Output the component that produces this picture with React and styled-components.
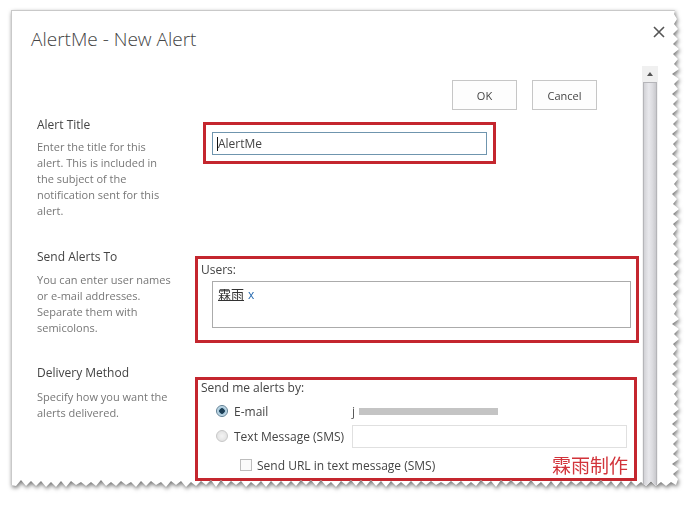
import styled, { createGlobalStyle } from "styled-components";

const GlobalStyle = createGlobalStyle`
    html, body {
        margin: 0;
        padding: 0;
        background: #ffffff;
        width: 700px;
        height: 506px;
        overflow: hidden;
    }
`;

const FONT = `"Segoe UI", "Open Sans", "Noto Sans CJK SC", sans-serif`;

// jagged "torn paper" outline for the right and bottom edges
const tornEdge = (w, h) => {
    const pts = ["0px 0px", `${w - 5}px 0px`];
    let i = 0;
    for (let y = 4; y < h - 8; y += 5, i++) {
        const jitter = Math.round((Math.sin(i * 12.9898) * 43758.5453) % 1 * 2);
        const x = w - (i % 2 ? 1 : 6) - Math.abs(jitter);
        pts.push(`${x}px ${y}px`);
    }
    pts.push(`${w - 4}px ${h - 3}px`);
    i = 0;
    for (let x = w - 9; x > 0; x -= 5, i++) {
        const jitter = Math.round((Math.sin(i * 78.233) * 12345.678) % 1 * 2);
        const y = h - (i % 2 ? 1 : 6) - Math.abs(jitter);
        pts.push(`${x}px ${y}px`);
    }
    pts.push(`0px ${h - 3}px`);
    return `polygon(${pts.join(", ")})`;
};

const Page = styled.div`
    width: 700px;
    height: 506px;
    padding: 10px 0 0 11px;
    box-sizing: border-box;
    filter: drop-shadow(1px 2px 2px rgba(0, 0, 0, 0.55));
`;

const Dialog = styled.div`
    width: 669px;
    height: 478px;
    box-sizing: border-box;
    background: #ffffff;
    border-left: 1px solid #c9c9c9;
    border-top: 1px solid #c9c9c9;
    clip-path: ${tornEdge(669, 478)};
    display: flex;
    flex-direction: column;
    font-family: ${FONT};
    color: #444444;
`;

const Header = styled.div`
    height: 55px;
    display: flex;
    justify-content: space-between;
    align-items: flex-start;
    padding: 15px 15px 0 19px;
    box-sizing: border-box;
`;

const Title = styled.h1`
    margin: 0;
    font-size: 19px;
    font-weight: 300;
    line-height: 26px;
    color: #444444;
`;

const CloseButton = styled.div`
    width: 12px;
    height: 12px;
    svg { display: block; }
`;

const Body = styled.div`
    flex: 1;
    display: flex;
    min-height: 0;
    padding-right: 22px;
`;

const Content = styled.div`
    flex: 1;
    display: flex;
    flex-direction: column;
    padding-left: 25px;
    overflow: hidden;
`;

const ButtonRow = styled.div`
    display: flex;
    justify-content: flex-end;
    gap: 15px;
    margin-top: 14px;
    padding-right: 45px;
`;

const Button = styled.div`
    width: 65px;
    height: 30px;
    box-sizing: border-box;
    border: 1px solid #c6c6c6;
    background: #fdfdfd;
    display: flex;
    align-items: center;
    justify-content: center;
    font-size: 11px;
    color: #444444;
`;

const Section = styled.div`
    display: flex;
    margin-top: ${({ $top }) => $top}px;
`;

const Info = styled.div`
    width: 158px;
    flex-shrink: 0;
`;

const Label = styled.div`
    font-size: 12px;
    line-height: 16px;
    color: #444444;
`;

const Desc = styled.div`
    margin-top: ${({ $gap }) => $gap}px;
    font-size: 11px;
    line-height: 16px;
    color: #777777;
    width: 136px;
`;

const Field = styled.div`
    flex: 1;
    min-width: 0;
`;

const Highlight = styled.div`
    border: 3px solid #c4262e;
    box-sizing: border-box;
    width: ${({ $w }) => $w}px;
    height: ${({ $h }) => $h}px;
    margin-top: ${({ $top }) => $top}px;
    margin-left: ${({ $left }) => $left || 0}px;
    padding: ${({ $pad }) => $pad};
`;

const TextInput = styled.div`
    height: 23px;
    box-sizing: border-box;
    border: 1px solid #6f95ae;
    display: flex;
    align-items: center;
    padding-left: 4px;
    font-size: 12px;
`;

const Caret = styled.span`
    width: 1px;
    height: 14px;
    background: #111111;
`;

const FieldLabel = styled.div`
    font-size: 12px;
    line-height: 16px;
    color: #444444;
`;

const PeoplePicker = styled.div`
    margin: 3px 0 0 11px;
    height: 47px;
    box-sizing: border-box;
    border: 1px solid #ababab;
    padding: 4px 5px;
    font-size: 12px;
    line-height: 16px;
`;

const Person = styled.span`
    text-decoration: underline;
    color: #333333;
    font-family: "Noto Sans CJK SC", sans-serif;
    font-size: 13px;
`;

const Remove = styled.span`
    color: #2a6cb0;
    margin-left: 4px;
`;

const OptionRow = styled.div`
    display: flex;
    align-items: center;
    height: ${({ $h }) => $h}px;
    margin-top: ${({ $top }) => $top || 0}px;
    padding-left: ${({ $indent }) => $indent}px;
    font-size: 12px;
`;

const Radio = styled.span`
    width: 12px;
    height: 12px;
    border-radius: 50%;
    box-sizing: border-box;
    flex-shrink: 0;
    border: 1px solid ${({ $checked }) => ($checked ? "#5d7e93" : "#c7c7c7")};
    background: ${({ $checked }) =>
        $checked
            ? "radial-gradient(circle, #1d3f56 0 2.5px, #9ec3d8 3px, #e6f0f6 6px)"
            : "radial-gradient(circle, #f4f4f4, #dcdcdc)"};
`;

const OptionLabel = styled.span`
    margin-left: 6px;
    width: 118px;
    flex-shrink: 0;
    white-space: nowrap;
`;

const Redacted = styled.span`
    display: flex;
    align-items: center;
    color: #555555;
`;

const RedactBar = styled.span`
    width: 139px;
    height: 7px;
    background: #c4c4c4;
    margin-left: 4px;
`;

const SmsInput = styled.div`
    width: 275px;
    height: 23px;
    box-sizing: border-box;
    border: 1px solid #e0e0e0;
`;

const Checkbox = styled.span`
    width: 12px;
    height: 12px;
    box-sizing: border-box;
    border: 1px solid #bdbdbd;
    background: #fafafa;
    flex-shrink: 0;
`;

const CheckLabel = styled.span`
    margin-left: 5px;
    white-space: nowrap;
`;

const Watermark = styled.span`
    margin-left: auto;
    margin-right: 6px;
    color: #d2333a;
    font-family: "Noto Sans CJK SC", sans-serif;
    font-size: 19px;
    line-height: 20px;
`;

const Scrollbar = styled.div`
    width: 16px;
    display: flex;
    flex-direction: column;
    background: #f2f2f2;
`;

const ScrollUp = styled.div`
    height: 16px;
    display: flex;
    align-items: center;
    justify-content: center;
    background: #f0f0f0;
    &::before {
        content: "";
        border-left: 3px solid transparent;
        border-right: 3px solid transparent;
        border-bottom: 4px solid #555555;
    }
`;

const Thumb = styled.div`
    flex: 1;
    margin: 0 1px;
    border: 1px solid #b5b5b9;
    border-bottom: none;
    background: linear-gradient(to right, #d2d2d6, #e8e8ec 40%, #dcdce0 70%, #c9c9cd);
`;

const App = () => {
    return (
        <>
            <GlobalStyle />
            <Page>
                <Dialog>
                    <Header>
                        <Title>AlertMe - New Alert</Title>
                        <CloseButton>
                            <svg width="12" height="12" viewBox="0 0 12 12">
                                <path d="M1 1 L11 11 M11 1 L1 11" stroke="#555" strokeWidth="1.6" />
                            </svg>
                        </CloseButton>
                    </Header>
                    <Body>
                        <Content>
                            <ButtonRow>
                                <Button>OK</Button>
                                <Button>Cancel</Button>
                            </ButtonRow>

                            <Section $top={7}>
                                <Info>
                                    <Label>Alert Title</Label>
                                    <Desc $gap={6}>
                                        Enter the title for this alert. This is included in the subject of the notification sent for this alert.
                                    </Desc>
                                </Info>
                                <Field>
                                    <Highlight $w={293} $h={42} $top={5} $left={8} $pad="7px 6px">
                                        <TextInput>
                                            <Caret />
                                            AlertMe
                                        </TextInput>
                                    </Highlight>
                                </Field>
                            </Section>

                            <Section $top={30}>
                                <Info>
                                    <Label>Send Alerts To</Label>
                                    <Desc $gap={7}>
                                        You can enter user names or e-mail addresses. Separate them with semicolons.
                                    </Desc>
                                </Info>
                                <Field>
                                    <Highlight $w={444} $h={87} $top={7} $pad="3px 5px 0 3px">
                                        <FieldLabel>Users:</FieldLabel>
                                        <PeoplePicker>
                                            <Person>霖雨</Person>
                                            <Remove>x</Remove>
                                        </PeoplePicker>
                                    </Highlight>
                                </Field>
                            </Section>

                            <Section $top={22}>
                                <Info>
                                    <Label>Delivery Method</Label>
                                    <Desc $gap={8}>
                                        Specify how you want the alerts delivered.
                                    </Desc>
                                </Info>
                                <Field>
                                    <Highlight $w={442} $h={104} $top={12} $pad="0 0 0 3px">
                                        <FieldLabel>Send me alerts by:</FieldLabel>
                                        <OptionRow $h={24} $top={3} $indent={15}>
                                            <Radio $checked />
                                            <OptionLabel>E-mail</OptionLabel>
                                            <Redacted>
                                                j<RedactBar />
                                            </Redacted>
                                        </OptionRow>
                                        <OptionRow $h={26} $indent={15}>
                                            <Radio />
                                            <OptionLabel>Text Message (SMS)</OptionLabel>
                                            <SmsInput />
                                        </OptionRow>
                                        <OptionRow $h={24} $top={4} $indent={39}>
                                            <Checkbox />
                                            <CheckLabel>Send URL in text message (SMS)</CheckLabel>
                                            <Watermark>霖雨制作</Watermark>
                                        </OptionRow>
                                    </Highlight>
                                </Field>
                            </Section>
                        </Content>
                        <Scrollbar>
                            <ScrollUp />
                            <Thumb />
                        </Scrollbar>
                    </Body>
                </Dialog>
            </Page>
        </>
    );
};

export default App;
